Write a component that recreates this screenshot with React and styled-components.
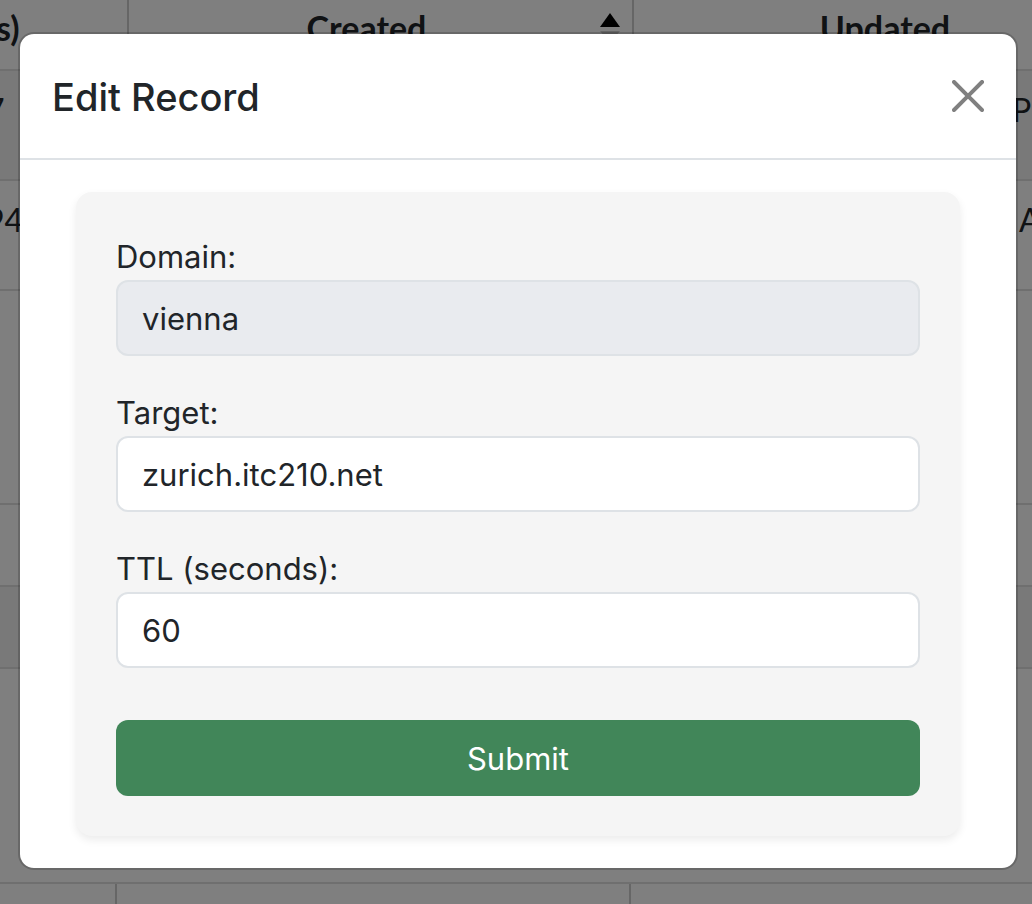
import React from "react";
import styled, { createGlobalStyle } from "styled-components";

const GlobalStyle = createGlobalStyle`
  *, *::before, *::after { box-sizing: border-box; }
  html, body, #root { height: 100%; }
  body {
    margin: 0;
    overflow: hidden;
    background: #fff;
    color: #212529;
    font-family: Inter, "Liberation Sans", sans-serif;
  }
`;

const Page = styled.div`
  position: relative;
  min-height: 100%;
`;

const Backdrop = styled.div`
  position: absolute;
  inset: 0;
  padding: 32px 14px 0 18px;
  background: rgba(0, 0, 0, 0.5);
`;

const Behind = styled.div`
  position: absolute;
  inset: 0;
  overflow: hidden;
  font-family: Lato, "Liberation Sans", sans-serif;
`;

const Table = styled.table`
  width: calc(100% + 128px);
  margin-left: -24px;
  border-collapse: separate;
  border-spacing: 0;
  table-layout: fixed;
`;

const HeadCell = styled.th`
  width: ${(p) => p.$width || "auto"};
  height: 71px;
  padding: 8px 12px 0 ${(p) => (p.$align === "left" ? 20 : 12)}px;
  border-right: 2px solid #cdcdcd;
  border-bottom: 2px solid #dedede;
  font-size: 34px;
  font-weight: 700;
  line-height: 40px;
  vertical-align: top;
  text-align: ${(p) => p.$align || "center"};
  white-space: nowrap;
  &:last-child { border-right: 0; }
`;

const HeadInner = styled.div`
  display: flex;
  align-items: center;
  gap: 8px;
  & > span { flex: 1; }
`;

const Cell = styled.td`
  height: ${(p) => p.$height}px;
  padding: 0 0 32px ${(p) => p.$indent || 0}px;
  border-bottom: 2px solid #dedede;
  background: ${(p) => (p.$shaded ? "#f2f2f2" : "#fff")};
  font-size: 32px;
  white-space: pre;
`;

const Footer = styled.div`
  display: flex;
  height: 40px;
`;

const FooterCell = styled.div`
  width: ${(p) => p.$width || "auto"};
  flex: ${(p) => (p.$width ? "none" : "1")};
  border-right: 2px solid #cdcdcd;
  &:last-child { border-right: 0; }
`;

const Dialog = styled.section`
  border: 2px solid rgba(0, 0, 0, 0.175);
  border-radius: 16px;
  background: #fff;
  background-clip: padding-box;
`;

const DialogHeader = styled.header`
  display: flex;
  align-items: center;
  justify-content: space-between;
  padding: 32px;
  border-bottom: 2px solid #dee2e6;
`;

const Title = styled.h1`
  margin: 0;
  padding-top: 2px;
  font-size: 38px;
  font-weight: 500;
  line-height: 58px;
`;

const CloseButton = styled.button`
  display: flex;
  padding: 0;
  border: 0;
  background: none;
  color: #808080;
  cursor: pointer;
`;

const DialogBody = styled.div`
  padding: 32px 56px;
`;

const Form = styled.form`
  padding: 40px;
  border-radius: 16px;
  background: #f5f5f5;
  box-shadow: 0 4px 8px rgba(0, 0, 0, 0.08);
`;

const Field = styled.div`
  margin-bottom: 32px;
`;

const Label = styled.label`
  display: block;
  padding-top: 2px;
  font-size: 31px;
  line-height: 46px;
`;

const Input = styled.input`
  display: block;
  width: 100%;
  height: 76px;
  padding: 0 24px;
  border: 2px solid #dee2e6;
  border-radius: 12px;
  background: #fff;
  color: #212529;
  font: inherit;
  font-size: 31px;
  &:read-only { background: #e9ebef; }
`;

const SubmitButton = styled.button`
  display: block;
  width: 100%;
  height: 76px;
  margin-top: 52px;
  border: 0;
  border-radius: 12px;
  background: #418659;
  color: #fff;
  font: inherit;
  font-size: 31px;
  cursor: pointer;
`;

const rows = [
  { height: 110, left: "7", right: "P", shaded: true },
  { height: 110, left: "94", right: " A" },
  { height: 214 },
  { height: 82 },
  { height: 82, shaded: true },
  { height: 215 },
];

function SortIcon() {
  return (
    <svg width="20" height="30" viewBox="0 0 20 30" aria-hidden="true">
      <path d="M0 14 10 0 20 14Z" fill="#000" />
      <path d="M0 18H20L10 30Z" fill="#c8c8c8" />
    </svg>
  );
}

export default function App() {
  return (
    <Page>
      <GlobalStyle />
      <Behind>
        <Table>
          <thead>
            <tr>
              <HeadCell $width="153px" $align="left">s)</HeadCell>
              <HeadCell $width="505px">
                <HeadInner><span>Created</span><SortIcon /></HeadInner>
              </HeadCell>
              <HeadCell>Updated</HeadCell>
            </tr>
          </thead>
          <tbody>
            {rows.map((row, i) => (
              <tr key={i}>
                <Cell $height={row.height} $shaded={row.shaded} $indent={10}>{row.left}</Cell>
                <Cell $height={row.height} $shaded={row.shaded} />
                <Cell $height={row.height} $shaded={row.shaded} $indent={378}>{row.right}</Cell>
              </tr>
            ))}
          </tbody>
        </Table>
        <Footer>
          <FooterCell $width="117px" />
          <FooterCell $width="514px" />
          <FooterCell />
        </Footer>
      </Behind>
      <Backdrop>
        <Dialog role="dialog" aria-modal="true" aria-labelledby="dialog-title">
          <DialogHeader>
            <Title id="dialog-title">Edit Record</Title>
            <CloseButton type="button" aria-label="Close">
              <svg width="32" height="32" viewBox="0 0 16 16" fill="currentColor" aria-hidden="true">
                <path d="M.293.293a1 1 0 0 1 1.414 0L8 6.586 14.293.293a1 1 0 1 1 1.414 1.414L9.414 8l6.293 6.293a1 1 0 0 1-1.414 1.414L8 9.414l-6.293 6.293a1 1 0 0 1-1.414-1.414L6.586 8 .293 1.707a1 1 0 0 1 0-1.414z" />
              </svg>
            </CloseButton>
          </DialogHeader>
          <DialogBody>
            <Form onSubmit={(e) => e.preventDefault()}>
              <Field>
                <Label htmlFor="domain">Domain:</Label>
                <Input id="domain" type="text" defaultValue="vienna" readOnly />
              </Field>
              <Field>
                <Label htmlFor="target">Target:</Label>
                <Input id="target" type="text" defaultValue="zurich.itc210.net" />
              </Field>
              <Field>
                <Label htmlFor="ttl">TTL (seconds):</Label>
                <Input id="ttl" type="text" inputMode="numeric" defaultValue="60" />
              </Field>
              <SubmitButton type="submit">Submit</SubmitButton>
            </Form>
          </DialogBody>
        </Dialog>
      </Backdrop>
    </Page>
  );
}
